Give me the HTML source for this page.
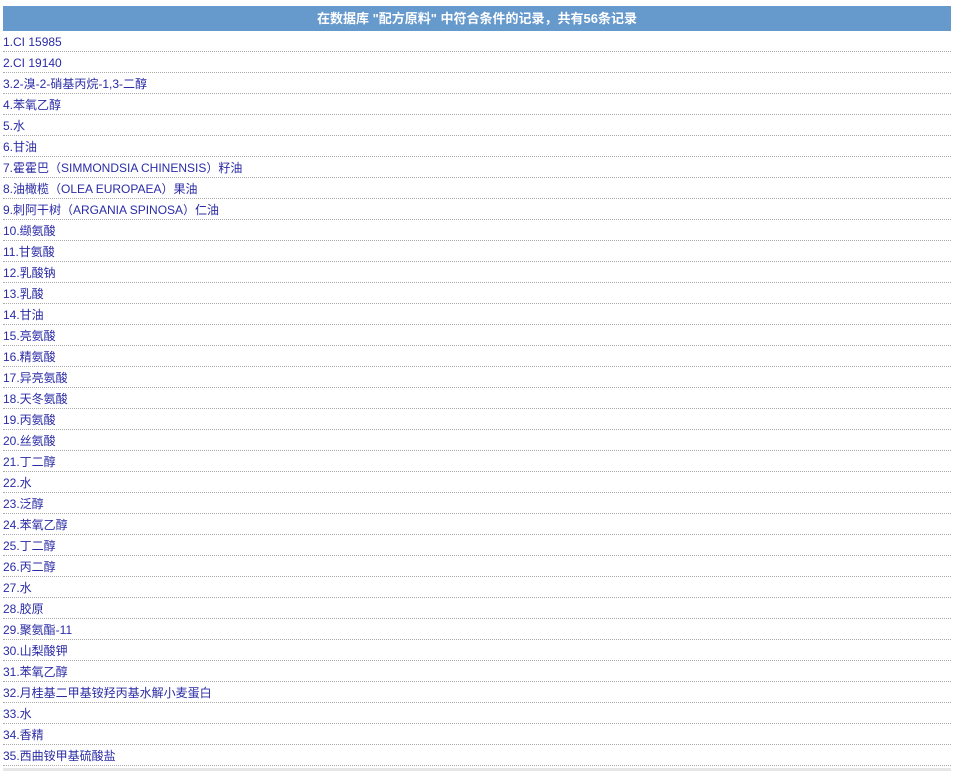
<!DOCTYPE html>
<html><head><meta charset="utf-8"><style>
body{margin:0;background:#fff;font-family:"Liberation Sans","Noto Sans CJK SC",sans-serif;}
.w{position:absolute;left:3px;top:6px;width:948px;}
.h{height:25px;background:#6699cc;color:#fff;font-weight:bold;font-size:13px;text-align:center;line-height:25px;}
.r{height:20px;border-bottom:1px dotted #aaa;font-size:12px;line-height:22px;color:#2b2ba6;white-space:nowrap;overflow:hidden;}
</style></head><body><div class="w">
<div class="h">在数据库 "配方原料" 中符合条件的记录，共有56条记录</div>
<div class="r">1.CI 15985</div>
<div class="r">2.CI 19140</div>
<div class="r">3.2-溴-2-硝基丙烷-1,3-二醇</div>
<div class="r">4.苯氧乙醇</div>
<div class="r">5.水</div>
<div class="r">6.甘油</div>
<div class="r">7.霍霍巴（SIMMONDSIA CHINENSIS）籽油</div>
<div class="r">8.油橄榄（OLEA EUROPAEA）果油</div>
<div class="r">9.刺阿干树（ARGANIA SPINOSA）仁油</div>
<div class="r">10.缬氨酸</div>
<div class="r">11.甘氨酸</div>
<div class="r">12.乳酸钠</div>
<div class="r">13.乳酸</div>
<div class="r">14.甘油</div>
<div class="r">15.亮氨酸</div>
<div class="r">16.精氨酸</div>
<div class="r">17.异亮氨酸</div>
<div class="r">18.天冬氨酸</div>
<div class="r">19.丙氨酸</div>
<div class="r">20.丝氨酸</div>
<div class="r">21.丁二醇</div>
<div class="r">22.水</div>
<div class="r">23.泛醇</div>
<div class="r">24.苯氧乙醇</div>
<div class="r">25.丁二醇</div>
<div class="r">26.丙二醇</div>
<div class="r">27.水</div>
<div class="r">28.胶原</div>
<div class="r">29.聚氨酯-11</div>
<div class="r">30.山梨酸钾</div>
<div class="r">31.苯氧乙醇</div>
<div class="r">32.月桂基二甲基铵羟丙基水解小麦蛋白</div>
<div class="r">33.水</div>
<div class="r">34.香精</div>
<div class="r">35.西曲铵甲基硫酸盐</div>
<div style="height:3px;background:#e6e6e6;margin-top:2px"></div>
</div></body></html>
